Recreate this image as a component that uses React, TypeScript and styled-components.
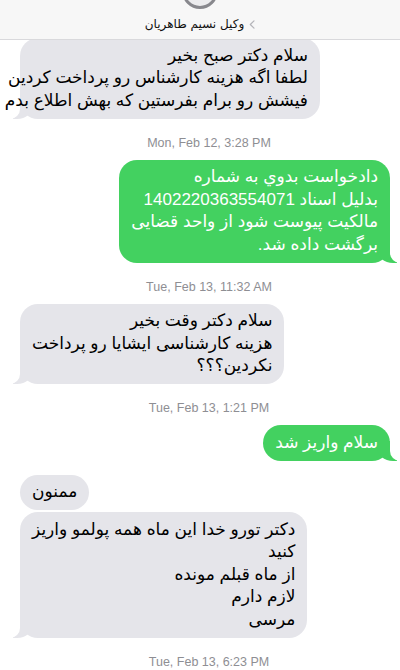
import React from "react";
import styled, { createGlobalStyle, css } from "styled-components";

const Global = createGlobalStyle`
  html, body { margin: 0; padding: 0; background: #ffffff; }
  body {
    font-family: "Liberation Sans", "DejaVu Sans", sans-serif;
    -webkit-font-smoothing: antialiased;
  }
`;

const Screen = styled.div`
  width: 400px;
  height: 670px;
  overflow: hidden;
  display: flex;
  flex-direction: column;
  background: #ffffff;
`;

const Header = styled.header`
  flex: none;
  height: 39px;
  background: #f7f7f7;
  border-bottom: 1px solid #d9d9dc;
  display: flex;
  flex-direction: column;
  align-items: center;
  overflow: hidden;
  position: relative;
  z-index: 2;
`;

const Avatar = styled.div`
  flex: none;
  width: 36px;
  height: 36px;
  box-sizing: border-box;
  border-radius: 50%;
  border: 3px solid #88888d;
  background: #ececee;
  margin-top: -27px;
`;

const NameRow = styled.div`
  margin-top: 8px;
  display: flex;
  align-items: center;
  gap: 5px;
  font-size: 12px;
  line-height: 14px;
  color: #111;
`;

const Name = styled.span`
  direction: rtl;
  font-family: "DejaVu Sans", sans-serif;
`;

const Thread = styled.main`
  flex: 1;
  display: flex;
  flex-direction: column;
  padding: 0 10px 0 20px;
`;

const GRAY = "#e5e5ea";
const GREEN = "#43d160";

const Bubble = styled.div<{ $out?: boolean; $tail?: boolean; $gap?: number }>`
  position: relative;
  z-index: 0;
  box-sizing: border-box;
  width: fit-content;
  max-width: 300px;
  margin-top: ${(p) => p.$gap ?? 0}px;
  padding: 6.5px 12px;
  border-radius: 18px;
  font-size: 17px;
  line-height: 22.5px;
  direction: rtl;
  text-align: right;
  white-space: nowrap;
  align-self: ${(p) => (p.$out ? "flex-end" : "flex-start")};
  background: ${(p) => (p.$out ? GREEN : GRAY)};
  color: ${(p) => (p.$out ? "#ffffff" : "#000000")};

  ${(p) =>
    p.$tail &&
    css`
      &::before,
      &::after {
        content: "";
        position: absolute;
        z-index: -1;
        bottom: 0;
        height: 20px;
      }
      &::before {
        width: 20px;
        background: ${p.$out ? GREEN : GRAY};
        ${p.$out
          ? css`right: -7px; border-bottom-left-radius: 16px 14px;`
          : css`left: -7px; border-bottom-right-radius: 16px 14px;`}
      }
      &::after {
        width: 10px;
        background: #ffffff;
        ${p.$out
          ? css`right: -10px; border-bottom-left-radius: 10px;`
          : css`left: -10px; border-bottom-right-radius: 10px;`}
      }
    `}
`;

const Line = styled.div`
  unicode-bidi: plaintext;
  direction: rtl;
`;

const Stamp = styled.div`
  align-self: center;
  margin: 17px 0 10px 8px;
  font-size: 12.5px;
  line-height: 14px;
  color: #8e8e93;
`;

const Chevron = () => (
  <svg width="6" height="9" viewBox="0 0 6 9" aria-hidden="true">
    <path d="M5 0.8 L1.3 4.5 L5 8.2" fill="none" stroke="#b4b4b9" strokeWidth="1.2" strokeLinecap="round" strokeLinejoin="round" />
  </svg>
);

type Item =
  | { kind: "stamp"; text: string }
  | { kind: "msg"; out?: boolean; tail?: boolean; gap?: number; lines: string[] };

const items: Item[] = [
  {
    kind: "msg",
    tail: true,
    gap: -2,
    lines: [
      "سلام دکتر صبح بخیر",
      "لطفا اگه هزینه کارشناس رو پرداخت کردین",
      "فیشش رو برام بفرستین که بهش اطلاع بدم",
    ],
  },
  { kind: "stamp", text: "Mon, Feb 12, 3:28 PM" },
  {
    kind: "msg",
    out: true,
    tail: true,
    lines: [
      "دادخواست بدوي به شماره",
      "بدلیل اسناد 1402220363554071",
      "مالکیت پیوست شود از واحد قضایی",
      "برگشت داده شد.",
    ],
  },
  { kind: "stamp", text: "Tue, Feb 13, 11:32 AM" },
  {
    kind: "msg",
    tail: true,
    lines: ["سلام دکتر وقت بخیر", "هزینه کارشناسی ایشایا رو پرداخت", "نکردین؟؟؟"],
  },
  { kind: "stamp", text: "Tue, Feb 13, 1:21 PM" },
  { kind: "msg", out: true, tail: true, lines: ["سلام واریز شد"] },
  { kind: "msg", gap: 14, lines: ["ممنون"] },
  {
    kind: "msg",
    tail: true,
    gap: 2,
    lines: [
      "دکتر تورو خدا این ماه همه پولمو واریز",
      "کنید",
      "از ماه قبلم مونده",
      "لازم دارم",
      "مرسی",
    ],
  },
  { kind: "stamp", text: "Tue, Feb 13, 6:23 PM" },
];

export default function App() {
  return (
    <>
      <Global />
      <Screen>
        <Header>
          <Avatar />
          <NameRow>
            <Name>وکیل نسیم طاهریان</Name>
            <Chevron />
          </NameRow>
        </Header>
        <Thread>
          {items.map((it, i) =>
            it.kind === "stamp" ? (
              <Stamp key={i}>{it.text}</Stamp>
            ) : (
              <Bubble key={i} $out={it.out} $tail={it.tail} $gap={it.gap}>
                {it.lines.map((l, j) => (
                  <Line key={j}>{l}</Line>
                ))}
              </Bubble>
            )
          )}
        </Thread>
      </Screen>
    </>
  );
}
